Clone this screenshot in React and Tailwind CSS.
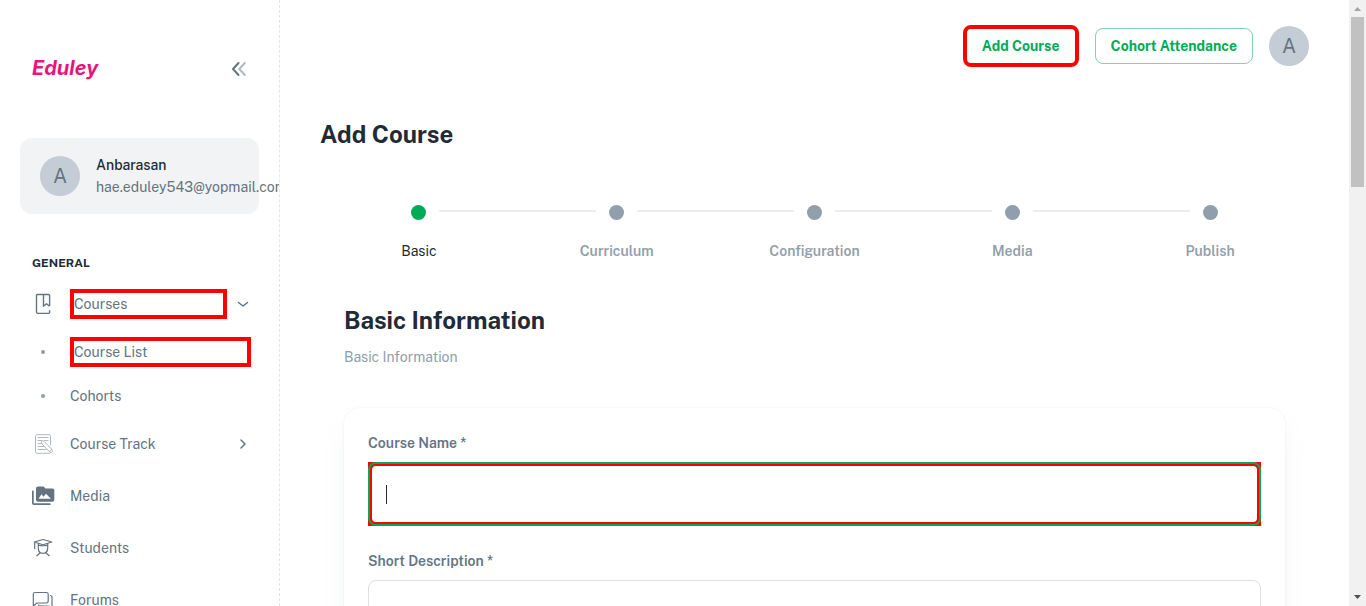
function BookIcon() {
  return (
    <svg viewBox="0 0 24 24" className="size-6" fill="none" stroke="currentColor" strokeWidth="1.400" strokeLinejoin="round" aria-hidden="true">
      <path d="M17.600 14V3.300c0-.5-.3-.8-.8-.8H5.300c-.5 0-.8.3-.8.8v16.800c0 .8.5 1.300 1.300 1.300h10.700c.7 0 1.100-.4 1.100-1v-2.200" />
      <path d="M11.500 2.500v11.700l3-2.400 3.100 2.400" />
    </svg>
  );
}

function NotesIcon() {
  return (
    <svg viewBox="0 0 24 24" className="size-6 opacity-50" fill="none" stroke="currentColor" strokeWidth="1" strokeLinecap="round" strokeLinejoin="round" aria-hidden="true">
      <path d="M18.500 13V4.200c0-.9-.6-1.500-1.500-1.500H5c-.9 0-1.500.6-1.500 1.500v15.600c0 .9.600 1.500 1.500 1.500h12.500c.7 0 1-.5 1-1.200" />
      <path d="M6 5.500h10M6 8.500h3M12.500 8.500H16M6 11.500h3.500M6 14.500h6M6 17.500h8" />
      <path d="m9.200 8.800.7 2.900 7.400 7.800 2.400-2.300-7.500-7.700zM17.300 19.500l1 .9c1.300.5 2.600-.8 2-2l-.6-1.200" />
    </svg>
  );
}

function MediaIcon() {
  return (
    <svg viewBox="0 0 24 24" className="size-6" fill="currentColor" aria-hidden="true">
      <path d="M1.700 6.500H.8c-.5 0-.8.400-.8.900V19c0 1.200.8 2 2 2h16.500v-1.700H1.700zM20.300 4.500h-6.800l-2-2H6c-1.100 0-2 .9-2 2v11.200c0 1.100.9 2 2 2h14.300c1.100 0 2-.9 2-2V6.500c0-1.100-.9-2-2-2zM6.500 14.700l3-4.500 2 2.500 2.500-3 4.800 5z" />
    </svg>
  );
}

function StudentIcon() {
  return (
    <svg viewBox="0 0 24 24" className="size-6" fill="none" stroke="currentColor" strokeWidth="1.200" strokeLinejoin="round" aria-hidden="true">
      <path d="M2.200 6 11 3.500 19.800 6 11 8.700zM2.700 6.300v7" />
      <path d="M6.300 7.500v4.500c0 3.200 2 5.300 4.700 5.300s4.700-2.100 4.700-5.300V7.500M6.500 9.200c2.500.6 6.500.6 9 0" />
      <path d="M8.200 16.700 4.500 20M13.800 16.700l3.700 3.300" />
    </svg>
  );
}

function ForumIcon() {
  return (
    <svg viewBox="1 0 24 24" className="size-6" fill="none" stroke="currentColor" strokeWidth="1.200" strokeLinejoin="round" aria-hidden="true">
      <path d="M4 4.500h11.500c1 0 1.700.7 1.700 1.700v7.100c0 1-.7 1.700-1.700 1.700H6l-3.700 3V6.200c0-1 .7-1.700 1.700-1.700z" />
      <path d="M19 7.500h.3c1 0 1.700.7 1.700 1.700V20l-3-2H9c-.9 0-1.500-.6-1.500-1.500" />
    </svg>
  );
}

function Chevron({ down }) {
  return (
    <svg viewBox="0 0 16 16" className="size-4 shrink-0" fill="none" stroke="currentColor" strokeWidth="1.500" strokeLinecap="round" strokeLinejoin="round" aria-hidden="true">
      <path d={down ? "m3.500 6.500 4.500 3.500 4.500-3.500" : "m6 4 4 4-4 4"} />
    </svg>
  );
}

function NavItem({ icon, label, chevron }) {
  return (
    <a href="#" className="flex h-12 items-center text-sm">
      <span className="flex w-[38px] shrink-0">{icon}</span>
      <span className="flex-1">{label}</span>
      {chevron}
    </a>
  );
}

function Bullet() {
  return (
    <span className="flex w-[38px] shrink-0 pl-[9px]">
      <span className="size-1 rounded-full bg-[#919eab]" />
    </span>
  );
}

function Avatar() {
  return (
    <span className="flex size-10 shrink-0 items-center justify-center rounded-full bg-[#c4cdd5] text-xl font-normal text-[#637381]">A</span>
  );
}

function Sidebar() {
  return (
    <aside className="flex w-[280px] shrink-0 flex-col overflow-hidden border-r border-dashed border-[#e3e6e9] px-5 text-[#637381]">
      <div className="flex items-center justify-between pt-14 pr-2 pl-3">
        <a href="#" className="font-['Inter',sans-serif] text-xl leading-6 font-bold text-[#e9147b] italic">Eduley</a>
        <button type="button" aria-label="Collapse menu">
          <svg viewBox="0 0 24 24" className="size-6" fill="none" strokeWidth="2" stroke="currentColor" strokeLinecap="round" strokeLinejoin="round" aria-hidden="true">
            <path d="m11.500 7-5.500 6 5.500 6" />
            <path d="m17.800 7-5.500 6 5.500 6" opacity=".5" />
          </svg>
        </button>
      </div>
      <div className="mt-[58px] flex h-[76px] shrink-0 items-center gap-4 rounded-xl bg-[#f1f3f4] px-5">
        <Avatar />
        <div className="text-sm leading-[22px] whitespace-nowrap">
          <p className="font-medium text-[#212b36]">Anbarasan</p>
          <p>hae.eduley543@yopmail.com</p>
        </div>
      </div>
      <nav className="pr-2 pl-3" aria-label="General">
        <h2 className="mt-10 text-xs leading-[18px] font-bold text-[#212b36]">GENERAL</h2>
        <div className="mt-2 flex h-12 items-center gap-2 text-sm">
          <a href="#" className="flex flex-1 items-center">
            <span className="flex w-[38px] shrink-0"><BookIcon /></span>
            <span className="h-[30px] flex-1 border-4 border-[#f00] leading-[22px]">Courses</span>
          </a>
          <Chevron down />
        </div>
        <a href="#" className="flex h-12 items-center text-sm">
          <Bullet />
          <span className="h-[30px] flex-1 border-4 border-[#f00] leading-[22px]">Course List</span>
        </a>
        <a href="#" className="flex h-10 items-center text-sm">
          <Bullet />
          <span>Cohorts</span>
        </a>
        <div className="mt-1 flex flex-col gap-1">
          <NavItem icon={<NotesIcon />} label="Course Track" chevron={<Chevron />} />
          <NavItem icon={<MediaIcon />} label="Media" />
          <NavItem icon={<StudentIcon />} label="Students" />
          <NavItem icon={<ForumIcon />} label="Forums" />
        </div>
      </nav>
    </aside>
  );
}

const steps = ["Basic", "Curriculum", "Configuration", "Media", "Publish"];

function Stepper() {
  return (
    <ol className="mt-[53px] flex">
      {steps.map((step, i) => (
        <li key={step} className="flex-1 text-center text-sm leading-[22px]">
          <div className="flex items-start justify-center gap-[13px]">
            <span className={i > 0 ? "mt-[5px] h-0.5 flex-1 bg-[#ededee]" : "flex-1"} />
            <span className={i === 0 ? "size-[15px] rounded-full bg-[#00ab55]" : "size-[15px] rounded-full bg-[#919eab]"} />
            <span className={i < steps.length - 1 ? "mt-[5px] h-0.5 flex-1 bg-[#ededee]" : "flex-1"} />
          </div>
          <p className={i === 0 ? "mt-5 text-[#212b36]" : "mt-5 font-semibold text-[#919eab]"}>{step}</p>
        </li>
      ))}
    </ol>
  );
}

function Scrollbar() {
  return (
    <div className="flex w-[17px] shrink-0 flex-col items-center bg-[#f1f1f1]" aria-hidden="true">
      <svg viewBox="0 0 17 17" className="size-[17px] shrink-0">
        <path d="M5 11h7L8.500 7z" fill="#a3a3a3" />
      </svg>
      <span className="h-[170px] w-[13px] bg-[#c1c1c1]" />
      <svg viewBox="0 0 17 17" className="mt-auto size-[17px] shrink-0">
        <path d="M5 6h7l-3.500 4z" fill="#505050" />
      </svg>
    </div>
  );
}

export default function App() {
  return (
    <div className="flex h-screen overflow-hidden bg-white font-['Public_Sans','Inter',sans-serif] text-[#212b36]">
      <Sidebar />
      <main className="min-w-0 flex-1 overflow-hidden px-10">
        <header className="flex h-[92px] items-center justify-end gap-4 text-sm font-bold text-[#00ab55]">
          <button type="button" className="h-[42px] rounded-lg border-4 border-[#f00] bg-[#fafffd] px-[15px]">Add Course</button>
          <button type="button" className="h-9 rounded-lg border border-[#7fd5aa] px-[15px]">Cohort Attendance</button>
          <Avatar />
        </header>
        <h1 className="mt-6 text-2xl leading-9 font-bold">Add Course</h1>
        <Stepper />
        <section className="mt-10 px-6">
          <h2 className="text-2xl leading-9 font-bold">Basic Information</h2>
          <p className="mt-2 text-sm leading-[22px] text-[#919eab]">Basic Information</p>
          <form className="mt-10 rounded-2xl p-6 shadow-[0_0_2px_0_rgba(145,158,171,0.2),0_12px_24px_-4px_rgba(145,158,171,0.12)]">
            <label htmlFor="course-name" className="block text-sm leading-[22px] font-semibold text-[#637381]">Course Name *</label>
            <div className="relative mt-2 bg-[#f00]">
              <div className="rounded-lg border-2 border-[#00ab55]">
                <input id="course-name" type="text" className="block h-[60px] w-full rounded-md border-2 border-[#f00] bg-white px-3.5 outline-none" />
              </div>
              <span className="absolute top-[23px] left-[18px] h-[19px] w-px bg-[#212b36]" aria-hidden="true" />
            </div>
            <label htmlFor="short-description" className="mt-6 block text-sm leading-[22px] font-semibold text-[#637381]">Short Description *</label>
            <textarea id="short-description" rows={4} className="mt-2 block w-full resize-none rounded-lg border border-[#dce0e4] p-3.5" />
          </form>
        </section>
      </main>
      <Scrollbar />
    </div>
  );
}
